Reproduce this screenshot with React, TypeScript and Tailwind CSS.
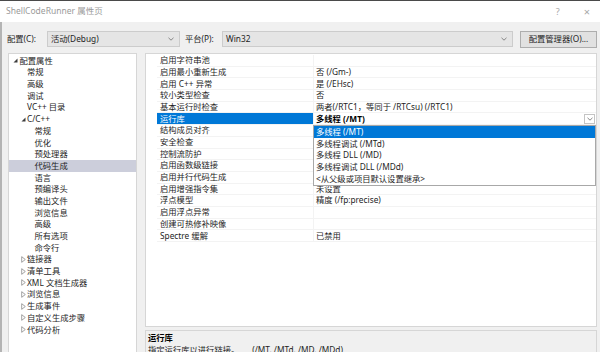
import React from 'react';

// --- Data ---

type TreeItem = { label: string; level: 0 | 1 | 2; toggle?: 'open' | 'closed'; selected?: boolean };

const treeItems: TreeItem[] = [
  { label: '配置属性', level: 0, toggle: 'open' },
  { label: '常规', level: 1 },
  { label: '高级', level: 1 },
  { label: '调试', level: 1 },
  { label: 'VC++ 目录', level: 1 },
  { label: 'C/C++', level: 1, toggle: 'open' },
  { label: '常规', level: 2 },
  { label: '优化', level: 2 },
  { label: '预处理器', level: 2 },
  { label: '代码生成', level: 2, selected: true },
  { label: '语言', level: 2 },
  { label: '预编译头', level: 2 },
  { label: '输出文件', level: 2 },
  { label: '浏览信息', level: 2 },
  { label: '高级', level: 2 },
  { label: '所有选项', level: 2 },
  { label: '命令行', level: 2 },
  { label: '链接器', level: 1, toggle: 'closed' },
  { label: '清单工具', level: 1, toggle: 'closed' },
  { label: 'XML 文档生成器', level: 1, toggle: 'closed' },
  { label: '浏览信息', level: 1, toggle: 'closed' },
  { label: '生成事件', level: 1, toggle: 'closed' },
  { label: '自定义生成步骤', level: 1, toggle: 'closed' },
  { label: '代码分析', level: 1, toggle: 'closed' },
];

// indent per tree level (the toggle slot sits right after it)
const indent = ['pl-[4px]', 'pl-[11.5px]', 'pl-[19px]'];

const properties: [string, string][] = [
  ['启用字符串池', ''],
  ['启用最小重新生成', '否 (/Gm-)'],
  ['启用 C++ 异常', '是 (/EHsc)'],
  ['较小类型检查', '否'],
  ['基本运行时检查', '两者(/RTC1，等同于 /RTCsu) (/RTC1)'],
  ['运行库', '多线程 (/MT)'],
  ['结构成员对齐', ''],
  ['安全检查', ''],
  ['控制流防护', ''],
  ['启用函数级链接', ''],
  ['启用并行代码生成', ''],
  ['启用增强指令集', '未设置'],
  ['浮点模型', '精度 (/fp:precise)'],
  ['启用浮点异常', ''],
  ['创建可热修补映像', ''],
  ['Spectre 缓解', '已禁用'],
];

const runtimeOptions = [
  '多线程 (/MT)',
  '多线程调试 (/MTd)',
  '多线程 DLL (/MD)',
  '多线程调试 DLL (/MDd)',
  '<从父级或项目默认设置继承>',
];

// --- Small drawings ---

const Chevron = () => (
  <svg width="6" height="4" viewBox="0 0 6 4" className="shrink-0">
    <path d="M0.5 0.8 L3 3.2 L5.5 0.8" fill="none" stroke="#7a7a7a" strokeWidth="0.9" />
  </svg>
);

const Toggle = ({ open }: { open: boolean }) =>
  open ? (
    <svg width="5" height="5" viewBox="0 0 5 5">
      <polygon points="4.5,0.5 4.5,4.5 0.5,4.5" fill="#3c3c3c" />
    </svg>
  ) : (
    <svg width="5" height="7" viewBox="0 0 5 7">
      <polygon points="0.7,0.7 4.3,3.5 0.7,6.3" fill="none" stroke="#8a8a8a" strokeWidth="0.8" />
    </svg>
  );

const ComboBox = ({ value, width }: { value: string; width: string }) => (
  <div className={`${width} h-[16px] flex items-center justify-between pl-[3px] pr-[5px] bg-[#e5e5e5] border border-[#cccccc]`}>
    <span>{value}</span>
    <Chevron />
  </div>
);

// --- Main dialog ---

const App: React.FC = () => {
  return (
    <div className="w-[600px] h-[352px] overflow-hidden flex flex-col bg-[#f0f0f0] text-[8.3px] leading-none text-[#1e1e1e] font-['Noto_Sans','Noto_Sans_CJK_SC',sans-serif]">
      {/* Title bar */}
      <div className="h-[22px] shrink-0 flex items-center justify-between bg-white border-t border-[#4a4a4a] pl-[6px] pr-[10px]">
        <span className="text-[8.5px] text-[#9a9a9a]">ShellCodeRunner 属性页</span>
        <div className="flex items-center gap-[24px] text-[#a8a8a8]">
          <span className="text-[9px]">?</span>
          <span className="text-[11px]">×</span>
        </div>
      </div>

      <div className="flex-1 flex flex-col border-l-2 border-[#b4b4b4] min-h-0">
        {/* Configuration row */}
        <div className="flex items-center h-[16px] mt-[9px] pl-[5px]">
          <span className="w-[40px]">配置(C):</span>
          <ComboBox value="活动(Debug)" width="w-[133px]" />
          <span className="w-[37px] ml-[5px]">平台(P):</span>
          <ComboBox value="Win32" width="w-[291px]" />
          <button className="ml-[7px] w-[77px] h-[17px] bg-[#e1e1e1] border border-[#adadad] text-[8.3px]">
            配置管理器(O)...
          </button>
        </div>

        {/* Main area */}
        <div className="flex mt-[6px] pl-[6px] min-h-0 flex-1">
          {/* Tree */}
          <div className="w-[129px] h-[320px] shrink-0 bg-white border border-[#d6d6d6] pt-[1px]">
            {treeItems.map((item, i) => (
              <div
                key={i}
                className={`h-[11.7px] flex items-center ${indent[item.level]} ${item.selected ? 'bg-[#cccedb]' : ''}`}
              >
                <span className="w-[6.5px] flex items-center">
                  {item.toggle && <Toggle open={item.toggle === 'open'} />}
                </span>
                <span>{item.label}</span>
              </div>
            ))}
          </div>

          {/* Right side: property grid + description */}
          <div className="ml-[8px] w-[452px] flex flex-col">
            <div className="h-[274px] shrink-0 bg-white border border-[#d6d6d6] pt-[1px]">
              <div className="relative">
                {properties.map(([name, value], i) => {
                  const active = name === '运行库';
                  return (
                    <div key={i} className="h-[11.7px] flex">
                      <div className="w-[11px]" />
                      <div
                        className={`w-[156px] flex items-center pl-[3px] border-b border-[#f3f3f3] ${
                          active ? 'bg-[#0078d7] text-white' : ''
                        }`}
                      >
                        {name}
                      </div>
                      <div className="flex-1 flex items-center justify-between pl-[2px] border-b border-l border-[#f3f3f3]">
                        <span className={active ? 'font-bold text-black' : ''}>{value}</span>
                        {active && (
                          <div className="w-[11px] h-[10px] mr-[1px] flex items-center justify-center border border-[#c4c4c4]">
                            <Chevron />
                          </div>
                        )}
                      </div>
                    </div>
                  );
                })}

                {/* Open dropdown list */}
                <div className="absolute left-[167px] top-[70.2px] w-[283px] bg-white border border-[#a8a8a8]">
                  {runtimeOptions.map((opt, i) => (
                    <div
                      key={i}
                      className={`h-[11.7px] flex items-center pl-[2px] ${i === 0 ? 'bg-[#0078d7] text-white' : ''}`}
                    >
                      {opt}
                    </div>
                  ))}
                </div>
              </div>
            </div>

            {/* Description */}
            <div className="mt-[3px] h-[40px] shrink-0 border border-[#d6d6d6] bg-[#f0f0f0] pl-[2px] pt-[3px]">
              <div className="font-bold text-black">运行库</div>
              <div className="mt-[4px]">指定运行库以进行链接。&nbsp;&nbsp;&nbsp;&nbsp;&nbsp;&nbsp;(/MT, /MTd, /MD, /MDd)</div>
            </div>
          </div>
        </div>
      </div>
    </div>
  );
};

export default App;
